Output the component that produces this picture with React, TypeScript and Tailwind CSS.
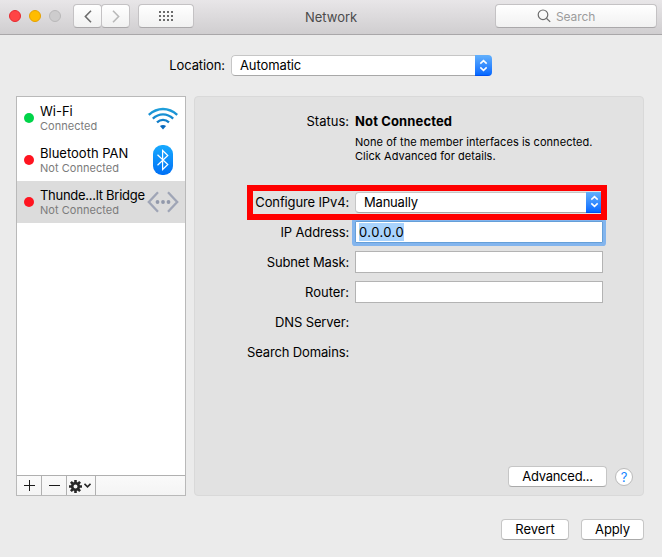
import type { ReactNode } from "react";

function Stepper({ className = "" }: { className?: string }) {
  return (
    <span className={`flex shrink-0 items-center justify-center border-b border-[#0050f0] bg-linear-to-b from-[#62b0fc] to-[#0368ff] ${className}`}>
      <svg width="9" height="13" viewBox="0 0 9 13" fill="none" stroke="#fff" strokeWidth="1.6">
        <path d="M1.3 4.6 4.5 1.7l3.2 2.9M1.3 8.4l3.2 2.9 3.2-2.9" />
      </svg>
    </span>
  );
}

function PushButton({ children, className = "" }: { children: ReactNode; className?: string }) {
  return (
    <button className={`h-[21px] rounded-[4px] border border-[#c6c6c6] border-b-[#aaaaaa] bg-white text-[13px] leading-[19px] ${className}`}>
      {children}
    </button>
  );
}

function WifiIcon() {
  return (
    <svg width="32" height="24" viewBox="0 0 32 24" fill="none" strokeWidth="2.3">
      <defs>
        <linearGradient id="wifi" gradientUnits="userSpaceOnUse" x1="0" y1="0" x2="0" y2="23">
          <stop stopColor="#22a6df" />
          <stop offset="1" stopColor="#0869bd" />
        </linearGradient>
      </defs>
      <g stroke="url(#wifi)">
        <path d="M1.8 8.8Q8.2 3 16 3t14.2 5.8" />
        <path d="M5.8 12.6Q10.4 8.4 16 8.4t10.2 4.2" />
        <path d="M10 16.4q2.7-2.5 6-2.5t6 2.5" />
      </g>
      <path d="M16 23.4l-3.1-3.4q3.1-2.2 6.2 0z" fill="#0869bd" />
    </svg>
  );
}

function BluetoothIcon() {
  return (
    <svg width="20" height="30" viewBox="0 0 20 30">
      <defs>
        <linearGradient id="bt" x1="0" y1="0" x2="0" y2="1">
          <stop stopColor="#18aaff" />
          <stop offset="1" stopColor="#0070f5" />
        </linearGradient>
      </defs>
      <rect width="20" height="30" rx="9" fill="url(#bt)" />
      <path d="M4.5 9.8 14.8 19.5 9.6 24.5V5.5l5.2 5L4.5 20.2" fill="none" stroke="#fff" strokeWidth="1.2" />
    </svg>
  );
}

function BridgeIcon() {
  return (
    <svg width="32" height="22" viewBox="0 0 32 22" fill="none" stroke="#9fa5b6" strokeWidth="2.3">
      <path d="M11 1.3 1.8 11l9.2 9.7M21 1.3 30.2 11 21 20.7" />
      <g fill="#9299ab" stroke="none">
        <circle cx="10.5" cy="11" r="1.9" />
        <circle cx="16" cy="11" r="1.9" />
        <circle cx="21.5" cy="11" r="1.9" />
      </g>
    </svg>
  );
}

function Service({ name, status, dot, icon, selected = false, nameClass = "" }: {
  name: string; status: string; dot: string; icon: ReactNode; selected?: boolean; nameClass?: string;
}) {
  return (
    <div className={`flex h-[42px] items-center pl-[7px] ${selected ? "bg-[#dcdcdc]" : ""}`}>
      <span className={`size-[10px] shrink-0 rounded-full ${dot}`} />
      <div className="-mt-px ml-[6px] w-[107px] shrink-0 whitespace-nowrap">
        <div className={`text-[13px] leading-4 ${nameClass}`}>{name}</div>
        <div className="text-[11px] leading-[14px] tracking-[0.03px] text-[#7b7b7b]">{status}</div>
      </div>
      <div className="flex w-8 shrink-0 justify-center">{icon}</div>
    </div>
  );
}

function Field({ label, labelClass = "tracking-[-0.14px]", children }: { label: string; labelClass?: string; children?: ReactNode }) {
  return (
    <div className="flex h-[30px] items-center">
      <div className={`w-[154px] pt-[2px] text-right ${labelClass}`}>{label}</div>
      <div className="ml-[6px] w-[248px]">{children}</div>
    </div>
  );
}

const gridDots = [0, 1, 2, 3].flatMap((x) => [0, 1, 2].map((y) => [x * 4, y * 4]));
const gearTeeth = [0, 45, 90, 135];

export default function App() {
  return (
    <div className="flex h-[557px] w-[662px] flex-col overflow-hidden bg-[#ebebeb] font-['Inter','Liberation_Sans',sans-serif] text-[13px] text-black">
      <header className="flex h-[35px] shrink-0 border-b border-[#a9a7a9] bg-linear-to-b from-[#e8e6e8] to-[#d0ced0]">
        <div className="flex w-[74px] gap-2 pt-[10px] pl-[9px]">
          <span className="size-3 rounded-full border border-[#e6292f] bg-[#ff4445]" />
          <span className="size-3 rounded-full border border-[#e5a000] bg-[#ffbc00]" />
          <span className="size-3 rounded-full border border-[#b9b8b9] bg-[#cdcccd]" />
        </div>
        <div className="flex h-7 pt-1">
          <span className="-ml-px flex h-6 w-[29px] items-center justify-center rounded-[4px] border border-[#c4c2c4] border-b-[#aaa8aa] bg-linear-to-b from-white to-[#f1f1f1]">
            <svg width="8" height="13" viewBox="0 0 8 13" fill="none" stroke="#6c6c6c" strokeWidth="1.6"><path d="M7 .8 1.4 6.5 7 12.2" /></svg>
          </span>
          <span className="-ml-px flex h-6 w-[29px] items-center justify-center rounded-[4px] border border-[#c4c2c4] border-b-[#aaa8aa] bg-linear-to-b from-white to-[#f1f1f1]">
            <svg width="8" height="13" viewBox="0 0 8 13" fill="none" stroke="#b9b9b9" strokeWidth="1.6"><path d="M1 .8l5.6 5.7L1 12.2" /></svg>
          </span>
          <span className="ml-2 flex h-6 w-14 items-center justify-center rounded-[4px] border border-[#c4c2c4] border-b-[#aaa8aa] bg-linear-to-b from-white to-[#f1f1f1]">
            <svg width="14" height="10" viewBox="0 0 14 10" fill="#6c6c6c">
              {gridDots.map(([x, y]) => <rect key={`${x}-${y}`} x={x} y={y} width="2" height="2" />)}
            </svg>
          </span>
        </div>
        <div className="flex-1 pl-[111px] text-[13px] leading-[34px] text-[#4b4b4b]">Network</div>
        <div className="mt-1 mr-[5px] flex h-6 w-[162px] items-center rounded-[4px] border border-[#c4c2c4] border-b-[#aaa8aa] bg-linear-to-b from-white to-[#f1f1f1] pl-[41px] text-[12px] text-[#9c9c9c]">
          <svg width="14" height="14" viewBox="0 0 14 14" fill="none" stroke="#6c6c6c" strokeWidth="1.2"><circle cx="6" cy="5.8" r="4.8" /><path d="m9.4 9.2 3.8 3.7" /></svg>
          <span className="ml-[5px] pt-px tracking-[-0.1px]">Search</span>
        </div>
      </header>

      <div className="flex h-[61px] shrink-0 items-center">
        <div className="w-[225px] text-right tracking-[-0.1px]">Location:</div>
        <div className="ml-[6px] flex h-[21px] w-[261px] overflow-hidden rounded-[4px]">
          <div className="flex-1 rounded-l-[4px] border border-r-0 border-[#c6c6c6] border-b-[#a8a8a8] bg-white pl-2 leading-[19px] tracking-[-0.1px]">Automatic</div>
          <Stepper className="w-[17px]" />
        </div>
      </div>

      <main className="flex h-[400px] shrink-0 gap-2 px-4">
        <aside className="flex w-[170px] flex-col border border-[#b9b9b9] bg-white">
          <div className="flex-1">
            <Service name="Wi-Fi" status="Connected" dot="bg-[#00d449]" icon={<WifiIcon />} />
            <Service name="Bluetooth PAN" status="Not Connected" dot="bg-[#ff1420]" icon={<BluetoothIcon />} />
            <Service name="Thunde...lt Bridge" status="Not Connected" dot="bg-[#ff1420]" icon={<BridgeIcon />} nameClass="tracking-[-0.28px]" selected />
          </div>
          <div className="flex h-5 border-t border-[#b0b0b0] bg-linear-to-b from-[#fafafa] to-[#f4f4f4]">
            <span className="flex w-[25px] items-center justify-center border-r border-[#b0b0b0]">
              <svg width="11" height="11" viewBox="0 0 11 11" stroke="#1a1a1a"><path d="M0 5.5h11M5.5 0v11" /></svg>
            </span>
            <span className="flex w-[25px] items-center justify-center border-r border-[#b0b0b0]">
              <svg width="11" height="11" viewBox="0 0 11 11" stroke="#1a1a1a"><path d="M0 5.5h11" /></svg>
            </span>
            <span className="flex w-[29px] items-center gap-[2px] border-r border-[#b0b0b0] pt-[2px] pl-[2px]">
              <svg width="13" height="13" viewBox="0 0 13 13" stroke="#282828">
                {gearTeeth.map((a) => (
                  <path key={a} d="M6.5 0v3M6.5 10v3" strokeWidth="2.6" transform={`rotate(${a} 6.5 6.5)`} />
                ))}
                <circle cx="6.5" cy="6.5" r="3.3" fill="none" strokeWidth="2.6" />
              </svg>
              <svg className="-mt-[2px]" width="7" height="5" viewBox="0 0 7 5" fill="none" stroke="#282828" strokeWidth="1.6"><path d="m.5.8 3 3 3-3" /></svg>
            </span>
          </div>
        </aside>

        <section className="relative w-[450px] rounded-[4px] border border-[#d9d9d9] bg-[#e2e2e2]">
          <div className="flex pt-[15px]">
            <div className="w-[154px] text-right leading-[18px]">Status:</div>
            <div className="ml-[6px] whitespace-nowrap">
              <div className="font-bold leading-[18px] tracking-[0.13px]">Not Connected</div>
              <div className="mt-[5px] text-[11px] leading-[14px] tracking-[0.05px]">None of the member interfaces is connected.<br />Click Advanced for details.</div>
            </div>
          </div>
          <div className="mt-[24px]">
            <Field label="Configure IPv4:">
              <div className="flex h-[21px] w-[247px]">
                <div className="flex-1 rounded-l-[4px] border border-r-0 border-[#c6c6c6] border-b-[#a8a8a8] bg-white pl-2 leading-[19px] tracking-[-0.2px]">Manually</div>
                <Stepper className="w-4" />
              </div>
            </Field>
            <Field label="IP Address:">
              <div className="h-[22px] rounded-[1px] border border-[#659fd8] bg-white pl-[3px] leading-[20px] ring-3 ring-[#83b5ee]">
                <span className="inline-block h-[18px] bg-[#a9d3fd] leading-[19px] tracking-[0.42px]">0.0.0.0</span>
              </div>
            </Field>
            <Field label="Subnet Mask:"><div className="h-[22px] border border-[#b3b3b3] bg-white" /></Field>
            <Field label="Router:" labelClass="tracking-normal"><div className="h-[22px] border border-[#b3b3b3] bg-white" /></Field>
            <Field label="DNS Server:" />
            <Field label="Search Domains:" />
          </div>
          <div className="mt-[99px] flex items-center justify-end gap-2 pr-[10px]">
            <PushButton className="w-[99px] tracking-[-0.25px]">Advanced...</PushButton>
            <button className="size-[18px] rounded-full border border-[#bababa] bg-white text-[13px] leading-4 text-[#1686ff]">?</button>
          </div>
          <div className="absolute top-[88px] left-[52px] h-[35px] w-[360px] border-6 border-[#ff0000]" />
        </section>
      </main>

      <footer className="flex justify-end gap-3 pt-[23px] pr-[18px]">
        <PushButton className="w-[68px]">Revert</PushButton>
        <PushButton className="w-[63px] tracking-[-0.1px]">Apply</PushButton>
      </footer>
    </div>
  );
}
